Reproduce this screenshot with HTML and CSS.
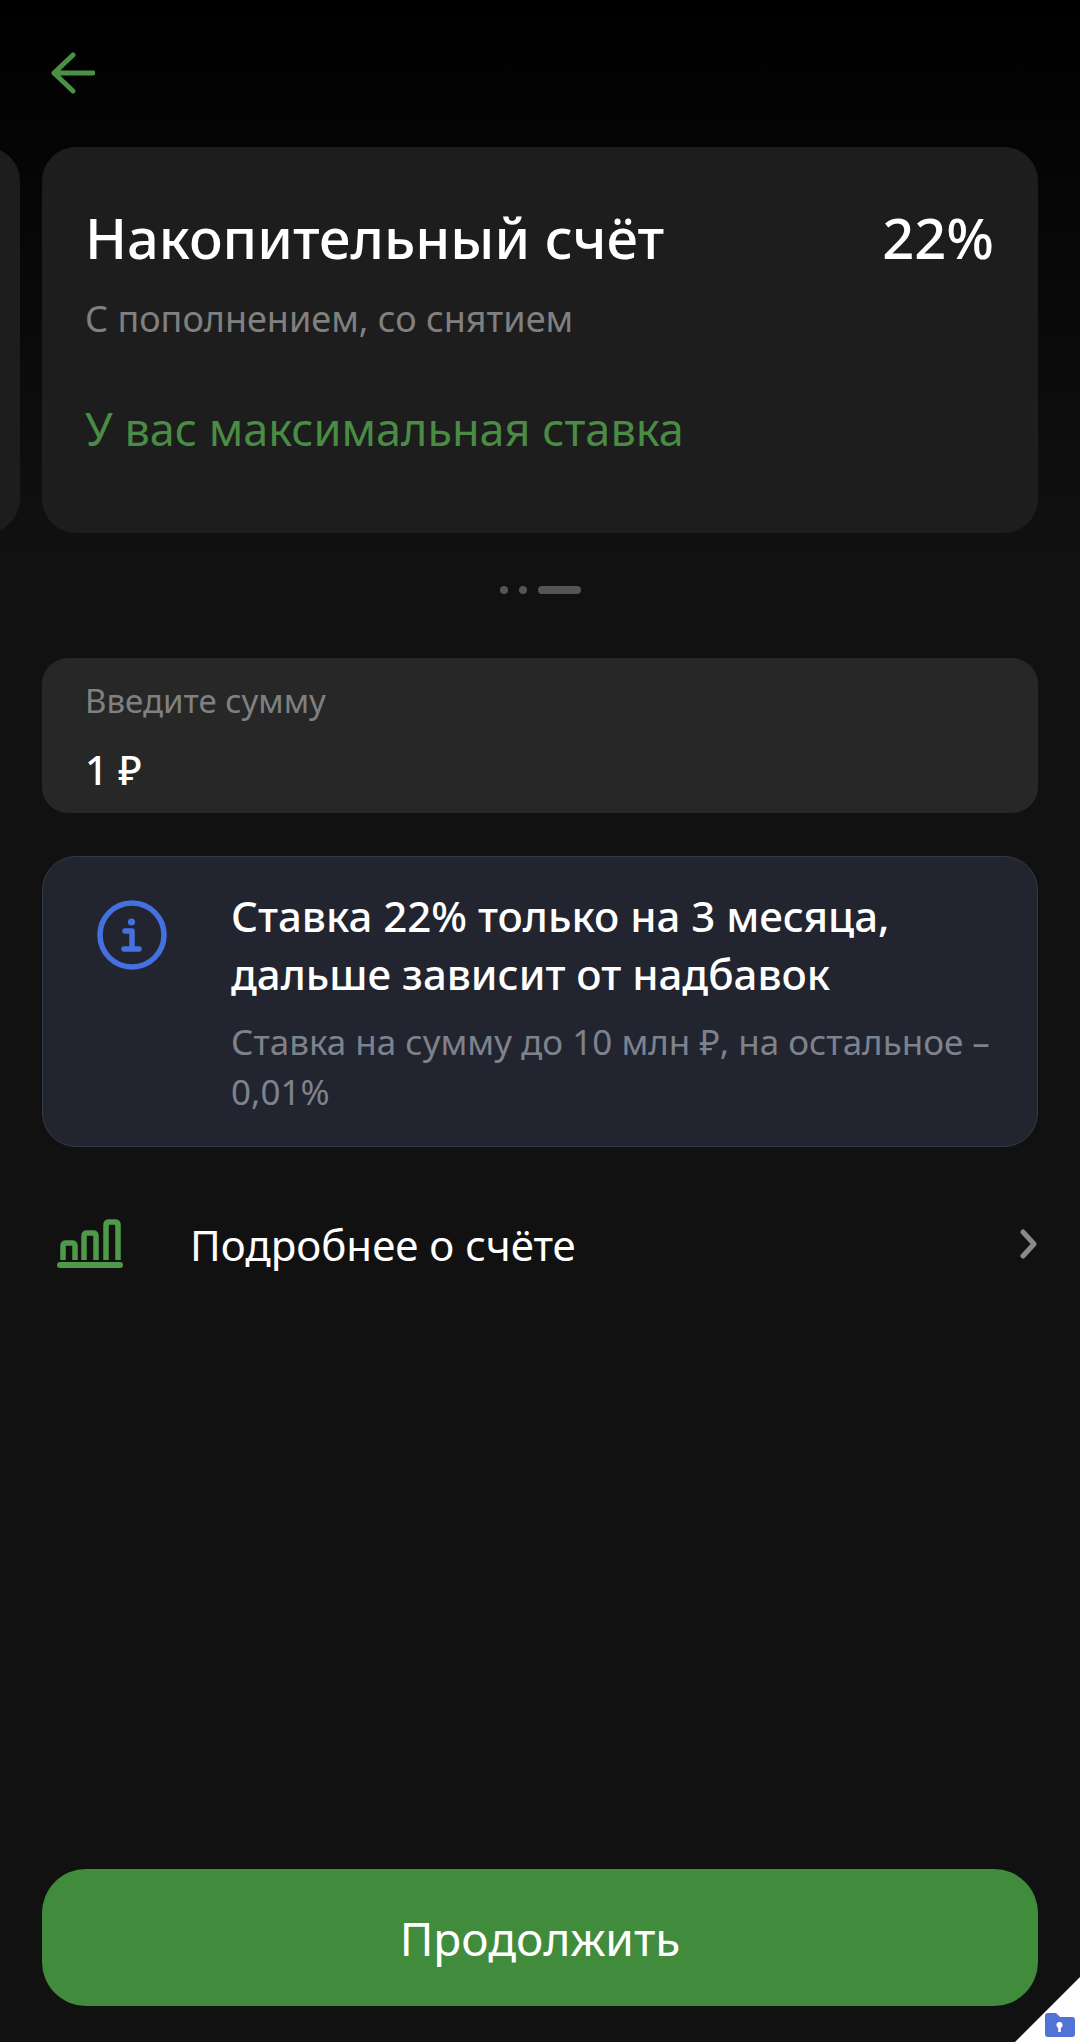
FILE: index.html
```html
<!DOCTYPE html>
<html lang="ru">

<head>
    <meta charset="UTF-8">
    <meta name="viewport" content="width=device-width, initial-scale=1.0">
    <title>Накопительный счёт</title>
    <link rel="stylesheet" href="styles.css">
</head>

<body>
    <div class="screen">
        <div class="top-bar">
            <svg class="back-icon" width="44" height="44" viewBox="0 0 44 44" fill="none">
                <path d="M22 4 L3 22 L22 40 M3 22 H42" stroke="#4a9144" stroke-width="5" stroke-linecap="round" stroke-linejoin="round" />
            </svg>
        </div>

        <div class="carousel">
            <div class="card"></div>
            <div class="card">
                <div class="card-head">
                    <span>Накопительный счёт</span>
                    <span>22%</span>
                </div>
                <div class="card-sub">С пополнением, со снятием</div>
                <div class="card-status">У вас максимальная ставка</div>
            </div>
        </div>

        <div class="dots">
            <span class="dot"></span>
            <span class="dot"></span>
            <span class="dot dot-active"></span>
        </div>

        <div class="amount-field">
            <div class="amount-label">Введите сумму</div>
            <div class="amount-value">1 ₽</div>
        </div>

        <div class="info-box">
            <svg class="info-icon" width="70" height="70" viewBox="0 0 70 70" fill="none">
                <circle cx="35" cy="35" r="32" stroke="#4470e0" stroke-width="5.5" />
                <circle cx="34.5" cy="22" r="3.6" fill="#4470e0" />
                <path d="M28 31 H35 V48 M27 49 H42" stroke="#4470e0" stroke-width="5.5" stroke-linecap="round" stroke-linejoin="round" />
            </svg>
            <div class="info-text">
                <div class="info-title">Ставка 22% только на 3 месяца, дальше зависит от надбавок</div>
                <div class="info-note">Ставка на сумму до 10 млн ₽, на остальное – 0,01%</div>
            </div>
        </div>

        <div class="details-row">
            <svg class="chart-icon" width="66" height="50" viewBox="0 0 66 50" fill="none">
                <path d="M6 41 V27 Q6 24 9 24 H15 Q18 24 18 27 V41 M27 41 V17 Q27 14 30 14 H36 Q39 14 39 17 V41 M49 41 V6 Q49 3 52 3 H58 Q61 3 61 6 V41" stroke="#4f9a49" stroke-width="5.5" />
                <path d="M3 46 H63" stroke="#4f9a49" stroke-width="6" stroke-linecap="round" />
            </svg>
            <span class="details-text">Подробнее о счёте</span>
            <svg class="chevron-icon" width="18" height="30" viewBox="0 0 18 30" fill="none">
                <path d="M3 3 L14 15 L3 27" stroke="#8a8a8c" stroke-width="5" stroke-linecap="round" stroke-linejoin="round" />
            </svg>
        </div>

        <div class="continue-button">Продолжить</div>

        <!-- corner mark over the screen -->
        <div class="corner-mark"></div>
        <svg class="corner-folder" width="30" height="24" viewBox="0 0 30 24">
            <path d="M0 3 Q0 0 3 0 H11 L15 4 H27 Q30 4 30 7 V21 Q30 24 27 24 H3 Q0 24 0 21 Z" fill="#5272d8" />
            <circle cx="14.5" cy="12" r="3" fill="#fff" />
            <rect x="13.2" y="13" width="2.6" height="6" fill="#fff" />
        </svg>
    </div>
</body>

</html>
```

FILE: styles.css
```css
body {
    margin: 0;
    background-color: #111111;
    font-family: "Noto Sans", Arial, sans-serif;
    color: #ffffff;
}

.screen {
    position: relative;
    height: 2042px;
    box-sizing: border-box;
    padding-bottom: 36px;
    display: flex;
    flex-direction: column;
    overflow: hidden;
    background: linear-gradient(#000000 0, #111111 560px);
}

.top-bar {
    height: 147px;
    box-sizing: border-box;
    padding: 51px 0 0 51px;
}

.back-icon {
    display: block;
}

.carousel {
    display: flex;
    justify-content: flex-end;
    gap: 22px;
    padding-right: 42px;
}

.card {
    flex-shrink: 0;
    width: 996px;
    height: 386px;
    box-sizing: border-box;
    padding: 54px 44px 0 43px;
    background-color: #1d1d1d;
    border-radius: 34px;
}

.card-head {
    display: flex;
    justify-content: space-between;
    font-size: 56px;
    line-height: 72px;
    font-weight: 500;
}

.card-sub {
    margin-top: 22px;
    font-size: 36px;
    line-height: 48px;
    color: #808080;
}

.card-status {
    margin-top: 56px;
    font-size: 45px;
    line-height: 60px;
    color: #4a8c44;
}

.dots {
    display: flex;
    justify-content: center;
    align-items: center;
    gap: 11px;
    margin-top: 53px;
    height: 8px;
}

.dot {
    width: 8px;
    height: 8px;
    border-radius: 50%;
    background-color: #555555;
}

.dot-active {
    width: 43px;
    border-radius: 4px;
}

.amount-field {
    margin: 64px 42px 0;
    height: 155px;
    box-sizing: border-box;
    padding: 22px 43px 0;
    background-color: #272727;
    border-radius: 26px;
}

.amount-label {
    font-size: 33px;
    line-height: 42px;
    color: #808080;
}

.amount-value {
    margin-top: 23px;
    font-size: 40px;
    line-height: 50px;
    font-weight: 500;
}

.info-box {
    margin: 43px 42px 0;
    height: 291px;
    box-sizing: border-box;
    padding: 30px 40px 0 54px;
    display: flex;
    background-color: #22252f;
    border: 1.5px solid #343945;
    border-radius: 34px;
}

.info-icon {
    flex-shrink: 0;
    margin-top: 13px;
}

.info-text {
    margin-left: 64px;
}

.info-title {
    font-size: 42px;
    line-height: 58px;
    font-weight: 500;
}

.info-note {
    margin-top: 14px;
    font-size: 35px;
    line-height: 50px;
    color: #7e828c;
}

.details-row {
    margin: 65px 42px 0;
    height: 64px;
    display: flex;
    align-items: center;
}

.chart-icon {
    flex-shrink: 0;
    margin-left: 15px;
}

.details-text {
    flex: 1;
    margin-left: 67px;
    font-size: 42px;
}

.continue-button {
    margin: auto 42px 0;
    height: 137px;
    display: flex;
    justify-content: center;
    align-items: center;
    background-color: #418c3c;
    border-radius: 44px;
    font-size: 46px;
}

.corner-mark {
    position: absolute;
    right: 0;
    bottom: 0;
    width: 65px;
    height: 65px;
    background-color: #ffffff;
    clip-path: polygon(100% 0, 100% 100%, 0 100%);
}

.corner-folder {
    position: absolute;
    right: 5px;
    bottom: 5px;
}
```
